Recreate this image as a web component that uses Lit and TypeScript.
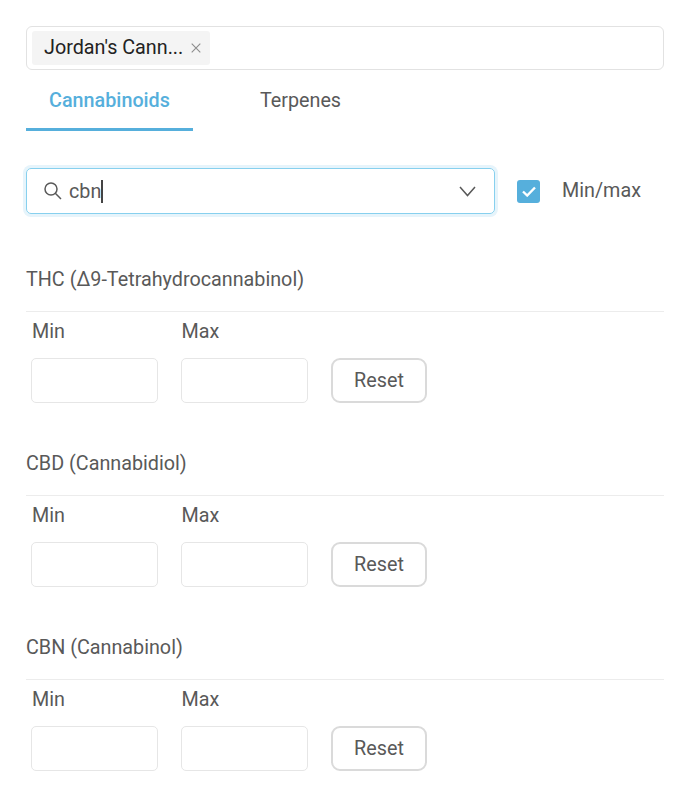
import { LitElement, html, css } from "lit";
import { customElement } from "lit/decorators.js";

const sections = ["THC (Δ9-Tetrahydrocannabinol)", "CBD (Cannabidiol)", "CBN (Cannabinol)"];

@customElement("app-root")
export class AppRoot extends LitElement {
  static styles = css`
    :host { display: block; width: 688px; height: 797px; background: #fff; font-family: Roboto, sans-serif; color: #595959; font-size: 19.75px; overflow: hidden; box-sizing: border-box; padding: 26px 24px 0 26px; }
    * { box-sizing: border-box; }
    .select { height: 44px; border: 1px solid #e2e2e2; border-radius: 6px; padding: 4px 5px; display: flex; }
    .tag { height: 34px; width: 178px; background: #f4f4f4; border-radius: 3px; padding-left: 12px; padding-bottom: 2px; display: flex; align-items: center; color: #222; gap: 8px; }
    .tag svg { display: block; margin-top: 2px; }
    .tabs { display: flex; height: 61px; }
    .tab { width: 167px; height: 61px; display: flex; justify-content: center; padding-top: 20px; line-height: 22px; border-bottom: 3px solid transparent; }
    .tab.active { color: #56afdc; font-weight: 500; border-bottom-color: #56afdc; }
    .tab.other { width: 215px; }
    .controls { display: flex; align-items: center; margin-top: 37px; }
    .search { width: 469px; height: 46px; border: 1px solid #87d0ee; border-radius: 5px; box-shadow: 0 0 0 3px #e6f4fb; display: flex; align-items: center; padding: 0 18px 0 17px; }
    .query { margin-left: 7px; display: flex; align-items: center; line-height: 24px; padding-top: 1px; }
    .caret { width: 1.5px; height: 23px; background: #444; margin-top: -1px; }
    .chev { margin-left: auto; display: block; }
    .check { width: 23px; height: 23px; margin-left: 22px; background: #56afdc; border-radius: 3px; display: flex; align-items: center; justify-content: center; }
    .mm { margin-left: 22px; margin-top: -1px; }
    .section { height: 184px; }
    .sections { margin-top: 53px; }
    h3 { margin: 0; font-size: 19.75px; font-weight: 400; line-height: 26px; height: 44px; }
    .rule { height: 1px; background: #ececec; }
    .labels { display: flex; padding-left: 6px; margin-top: 8px; line-height: 24px; }
    .labels span { width: 149.5px; }
    .fields { display: flex; align-items: center; margin-top: 14px; padding-left: 5px; }
    .input { width: 127px; height: 45px; border: 1px solid #e6e6e6; border-radius: 5px; margin-right: 23px; }
    .btn { width: 96px; height: 45px; border: 2px solid #dadada; border-radius: 9px; display: flex; align-items: center; justify-content: center; color: #595959; }
  `;

  render() {
    return html`
      <div class="select">
        <div class="tag">Jordan's Cann...
          <svg width="10" height="10" viewBox="0 0 10 10"><path d="M.7.7l8.6 8.6M9.3.7L.7 9.3" stroke="#8c8c8c" stroke-width="1.1" fill="none"/></svg>
        </div>
      </div>
      <div class="tabs">
        <div class="tab active">Cannabinoids</div>
        <div class="tab other">Terpenes</div>
      </div>
      <div class="controls">
        <div class="search">
          <svg width="18" height="18" viewBox="0 0 18 18"><circle cx="7" cy="7" r="6" fill="none" stroke="#595959" stroke-width="1.5"/><path d="M11.3 11.3l5.7 5.7" stroke="#595959" stroke-width="1.5" fill="none"/></svg>
          <div class="query">cbn<span class="caret"></span></div>
          <svg class="chev" width="17" height="11" viewBox="0 0 17 11"><path d="M1 1l7.5 8.5L16 1" stroke="#595959" stroke-width="1.5" fill="none"/></svg>
        </div>
        <div class="check"><svg width="14" height="11" viewBox="0 0 14 11"><path d="M1 5.5l4.2 4L13 1.5" stroke="#fff" stroke-width="2.4" fill="none"/></svg></div>
        <div class="mm">Min/max</div>
      </div>
      <div class="sections">
        ${sections.map(s => html`
          <div class="section">
            <h3>${s}</h3>
            <div class="rule"></div>
            <div class="labels"><span>Min</span><span>Max</span></div>
            <div class="fields"><div class="input"></div><div class="input"></div><div class="btn">Reset</div></div>
          </div>`)}
      </div>
    `;
  }
}
